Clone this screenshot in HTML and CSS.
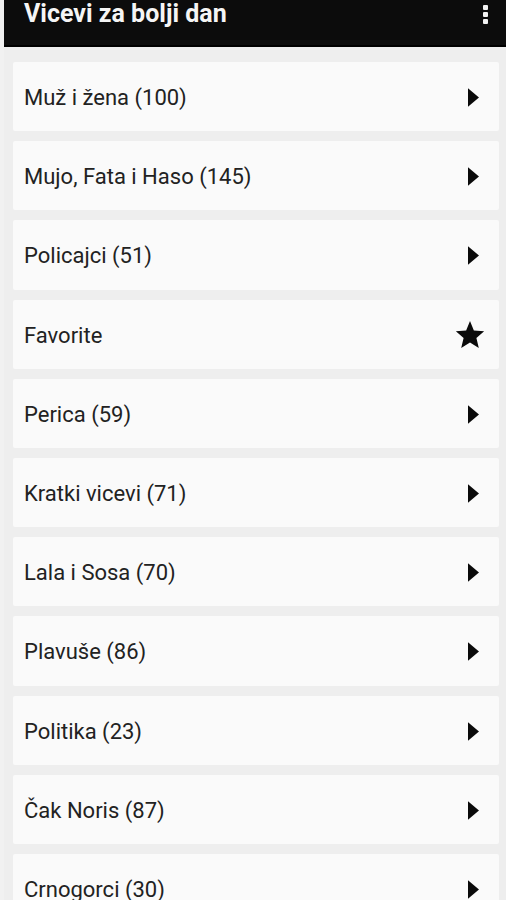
FILE: index.html
```html
<!DOCTYPE html>
<html lang="sr">
<head>
  <meta charset="UTF-8">
  <meta name="viewport" content="width=device-width, initial-scale=1.0">
  <title>Vicevi za bolji dan</title>
  <link rel="stylesheet" href="styles.css">
</head>
<body>
  <div class="app">
    <header class="toolbar">
      <h1 class="title">Vicevi za bolji dan</h1>
      <button class="menu-btn" aria-label="Meni">
        <span class="dot"></span>
        <span class="dot"></span>
        <span class="dot"></span>
      </button>
    </header>

    <ul class="category-list">
      <li class="category">
        <span class="name">Muž i žena (100)</span>
        <svg class="arrow" viewBox="0 0 12 20"><path d="M0 0 L12 10 L0 20 Z"/></svg>
      </li>
      <li class="category">
        <span class="name">Mujo, Fata i Haso (145)</span>
        <svg class="arrow" viewBox="0 0 12 20"><path d="M0 0 L12 10 L0 20 Z"/></svg>
      </li>
      <li class="category">
        <span class="name">Policajci (51)</span>
        <svg class="arrow" viewBox="0 0 12 20"><path d="M0 0 L12 10 L0 20 Z"/></svg>
      </li>
      <li class="category">
        <span class="name">Favorite</span>
        <!-- star for favourites -->
        <svg class="star" viewBox="0 0 24 24"><path d="M12 1.5 L14.9 8.6 L22.6 9.2 L16.8 14.2 L18.6 21.7 L12 17.7 L5.4 21.7 L7.2 14.2 L1.4 9.2 L9.1 8.6 Z"/></svg>
      </li>
      <li class="category">
        <span class="name">Perica (59)</span>
        <svg class="arrow" viewBox="0 0 12 20"><path d="M0 0 L12 10 L0 20 Z"/></svg>
      </li>
      <li class="category">
        <span class="name">Kratki vicevi (71)</span>
        <svg class="arrow" viewBox="0 0 12 20"><path d="M0 0 L12 10 L0 20 Z"/></svg>
      </li>
      <li class="category">
        <span class="name">Lala i Sosa (70)</span>
        <svg class="arrow" viewBox="0 0 12 20"><path d="M0 0 L12 10 L0 20 Z"/></svg>
      </li>
      <li class="category">
        <span class="name">Plavuše (86)</span>
        <svg class="arrow" viewBox="0 0 12 20"><path d="M0 0 L12 10 L0 20 Z"/></svg>
      </li>
      <li class="category">
        <span class="name">Politika (23)</span>
        <svg class="arrow" viewBox="0 0 12 20"><path d="M0 0 L12 10 L0 20 Z"/></svg>
      </li>
      <li class="category">
        <span class="name">Čak Noris (87)</span>
        <svg class="arrow" viewBox="0 0 12 20"><path d="M0 0 L12 10 L0 20 Z"/></svg>
      </li>
      <li class="category">
        <span class="name">Crnogorci (30)</span>
        <svg class="arrow" viewBox="0 0 12 20"><path d="M0 0 L12 10 L0 20 Z"/></svg>
      </li>
    </ul>
  </div>
</body>
</html>
```

FILE: styles.css
```css
* {
  margin: 0;
  padding: 0;
  box-sizing: border-box;
}

body {
  font-family: Roboto, "Liberation Sans", Arial, sans-serif;
  background-color: #f1f1f1;
  height: 900px;
  overflow: hidden;
}

.app {
  margin-left: 4px;
  background-color: #eeeeee;
  min-height: 900px;
}

/* Top bar */
.toolbar {
  height: 47px;
  background-color: #0c0c0c;
  border-bottom: 2px solid #000;
  display: flex;
  align-items: flex-start;
  justify-content: space-between;
  padding: 0 18px 0 20px;
}

.title {
  color: #f5f5f5;
  font-size: 25px;
  font-weight: 700;
  line-height: 28px;
  margin-top: 0;
}

.menu-btn {
  background: none;
  border: none;
  display: flex;
  flex-direction: column;
  gap: 2px;
  padding-top: 5px;
}

.dot {
  width: 5px;
  height: 5px;
  background-color: #f2f2f2;
  border-radius: 1px;
}

/* Category cards */
.category-list {
  list-style: none;
  padding: 15px 7px 0 9px;
  display: flex;
  flex-direction: column;
  gap: 10px;
}

.category {
  height: 69.2px;
  background-color: #fafafa;
  border-radius: 2px;
  display: flex;
  align-items: center;
  justify-content: space-between;
  padding: 2px 20px 0 11px;
}

.name {
  font-size: 22px;
  color: #222;
}

.arrow {
  width: 11px;
  height: 19px;
  fill: #0a0a0a;
}

.star {
  width: 32px;
  height: 32px;
  fill: #0a0a0a;
  margin-right: -7px;
}
```
